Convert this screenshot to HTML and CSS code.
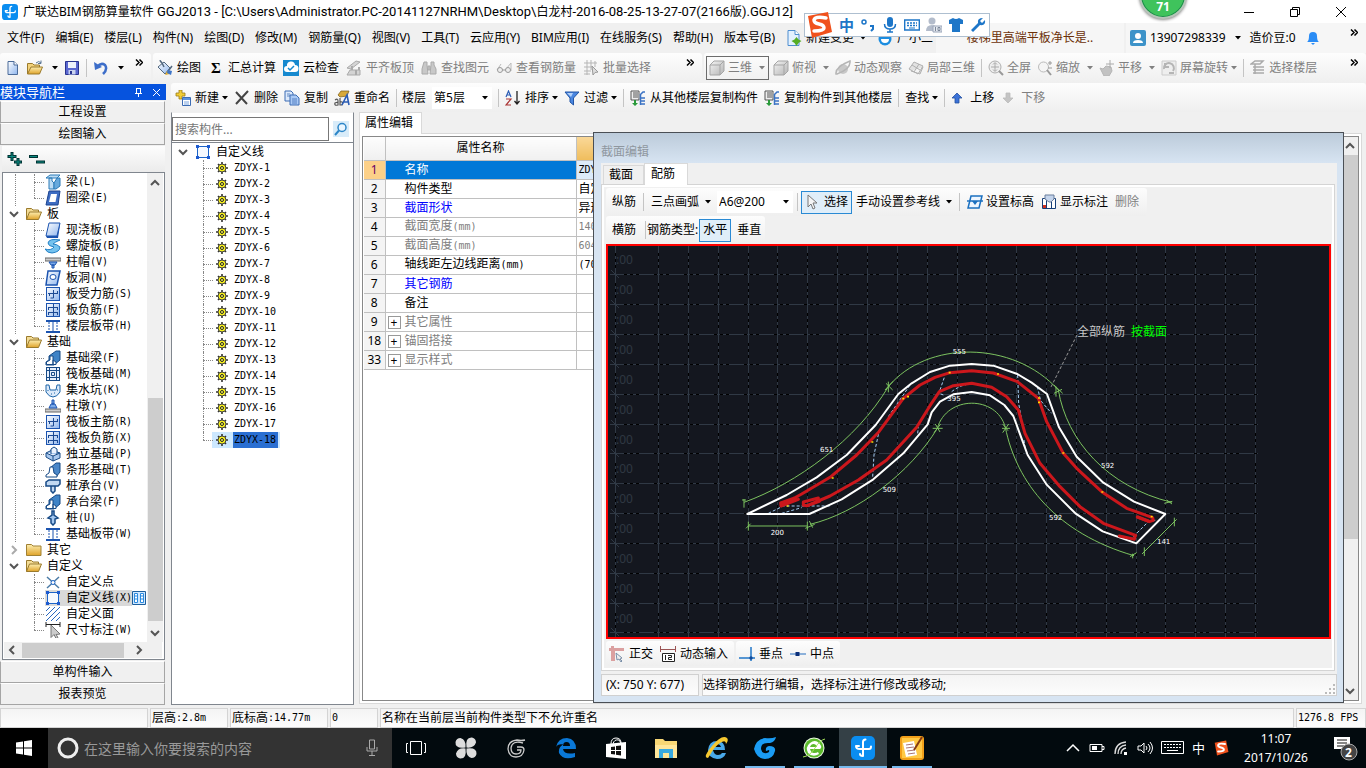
FILE: index.html
```html
<!DOCTYPE html>
<html lang="zh-CN">
<head>
<meta charset="utf-8">
<title>广联达BIM钢筋算量软件 GGJ2013</title>
<link rel="stylesheet" href="styles.css">
</head>
<body>
<svg class="defs" aria-hidden="true">
<defs>
<linearGradient id="gold" x1="0" y1="0" x2="0" y2="1"><stop offset="0" stop-color="#fdeeb0"/><stop offset="1" stop-color="#dfa32a"/></linearGradient>
<linearGradient id="blue" x1="0" y1="0" x2="1" y2="1"><stop offset="0" stop-color="#fff"/><stop offset="1" stop-color="#8fb6ee"/></linearGradient>
<linearGradient id="grey" x1="0" y1="0" x2="1" y2="1"><stop offset="0" stop-color="#f4f4f4"/><stop offset="1" stop-color="#b4b4b4"/></linearGradient>
<symbol id="app" viewBox="0 0 24 24"><rect width="24" height="24" rx="5" fill="#0a8df0"/><path d="M12 20V6M12 6q0-2.500 2.500-2.500M5 10q0 3 4 3h9q2 0 2-2.500M5 10h3M12 20q-3 0-3-2" fill="none" stroke="#fff" stroke-width="2" stroke-linecap="round"/></symbol>
<symbol id="caret" viewBox="0 0 6 4"><path d="M0 0h6L3 3.500z" fill="currentColor"/></symbol>
<symbol id="more" viewBox="0 0 8 7"><path d="M1 .5l3 3-3 3M4.500.5l3 3-3 3" fill="none" stroke="currentColor" stroke-width="1.500"/></symbol>
<symbol id="down" viewBox="0 0 10 10"><path d="M1 3l4 4 4-4" fill="none" stroke="currentColor" stroke-width="2"/></symbol>
<symbol id="new" viewBox="0 0 16 16"><path d="M3 1.500h6l3.500 3.500v9.500H3z" fill="url(#blue)" stroke="#4b6b99"/><path d="M9 1.500V5h3.500" fill="#fff" stroke="#4b6b99"/></symbol>
<symbol id="newg" viewBox="0 0 16 16"><path d="M2 .5h7l4 4v11H2z" fill="#e3f1ff" stroke="#4f8ed0"/><path d="M9 .5v4h4" fill="#fff" stroke="#4f8ed0"/><path d="M10.500 7l2 2.500 3 1.500-3 2-2 3-2-3-3-2 3-1.500z" fill="#55ad25"/></symbol>
<symbol id="open" viewBox="0 0 16 16"><path d="M.5 14V3.500h5L7 5h5.500v2" fill="#f3d27a" stroke="#9a7a2c"/><path d="M.5 14l3.500-7h11.500l-3 7z" fill="url(#gold)" stroke="#9a7a2c"/><path d="M9 3q3-3 5 0M14 .5V3.500h-3" fill="none" stroke="#5a7695"/></symbol>
<symbol id="fopen" viewBox="0 0 16 16"><path d="M.5 13.500V2.500h5L7 4h5.500v2" fill="#f3dc96" stroke="#9a7a2c"/><path d="M.5 13.500l3-7.500h12l-3 7.500z" fill="url(#gold)" stroke="#9a7a2c"/></symbol>
<symbol id="folder" viewBox="0 0 16 16"><path d="M.5 13.500v-11h5L7 4h8v9.500z" fill="url(#gold)" stroke="#a18133"/></symbol>
<symbol id="save" viewBox="0 0 16 16"><path d="M1.500 1.500h13v13h-13z" fill="#5a67d0" stroke="#28338f"/><path d="M4 2h8v6H4z" fill="#eef2fc"/><path d="M4.500 10h7v4.500h-7z" fill="#c9d3ef"/><path d="M6 11h2v3H6z" fill="#28338f"/></symbol>
<symbol id="undo" viewBox="0 0 16 16"><path d="M1 2l1 8 7-3z" fill="#3d6ec9"/><path d="M4 7q4-5 8-2 3 4-2 9" fill="none" stroke="#3d6ec9" stroke-width="2.500"/></symbol>
<symbol id="draw" viewBox="0 0 16 16"><path d="M1 7l6-5 6 6-5 6z" fill="url(#blue)" stroke="#52687f"/><path d="M4 2Q2-1 5 3l2 4M9 14l6-8" fill="none" stroke="#52687f" stroke-width="1.500"/><path d="M8 15l2-4 3 3z" fill="#e8b130"/><path d="M11 10l4 1-1 4-4-2z" fill="#3c74c8"/></symbol>
<symbol id="cloud" viewBox="0 0 16 16"><rect width="16" height="16" fill="#1689cf"/><path d="M4 12a3 3 0 010-6 4 4 0 018-1 3.500 3.500 0 010 7z" fill="#fff"/><path d="M5 8l2 2 4-4" fill="none" stroke="#1689cf" stroke-width="1.500"/></symbol>
<symbol id="align" viewBox="0 0 16 16"><path d="M1 8l9-7 4 1-9 7zM4 10h10v5H1z" fill="#d4d4d4" stroke="#aaa"/><path d="M6 10V6M10 10v5M13 10V7" stroke="#aaa" stroke-width="2"/></symbol>
<symbol id="find" viewBox="0 0 16 16"><path d="M3 2h3v3l1 9H1V9zM10 2h3v3l2 4v5H9l1-9zM7 6h2v4H7z" fill="#c8c8c8" stroke="#aaa"/></symbol>
<symbol id="glasses" viewBox="0 0 16 16"><path d="M1 10l4-6M10 9l5-6v8" fill="none" stroke="#bbb"/><circle cx="4" cy="10" r="2.500" fill="#eee" stroke="#999"/><circle cx="12" cy="10" r="2.500" fill="#eee" stroke="#999"/><path d="M6.500 10h3" stroke="#999"/></symbol>
<symbol id="batch" viewBox="0 0 16 16"><path d="M1 3h13M1 7h9M1 11h7M4 0v15M8 0v10M12 1v6M1 14h6" stroke="#b5b5b5"/><path d="M9 6l6 6-3 .5L10 15z" fill="#ddd" stroke="#999"/></symbol>
<symbol id="cube" viewBox="0 0 16 16"><path d="M1 5l4-4h10v10l-4 4H1z" fill="url(#grey)" stroke="#a5a5a5"/><path d="M1 5h10v10M11 5l4-4" fill="none" stroke="#a5a5a5"/></symbol>
<symbol id="orbit" viewBox="0 0 16 16"><ellipse cx="8" cy="9" rx="5" ry="5" fill="#c8c8c8"/><path d="M1 14Q0 7 15 1q1 8-13 13z" fill="none" stroke="#b5b5b5" stroke-width="1.500"/></symbol>
<symbol id="local3d" viewBox="0 0 16 16"><path d="M1 9l5-7 9 4-5 8zM4 5l8 5M6 12l5-8M3 11l9 3 3-7" fill="#e2e2e2" stroke="#b0b0b0"/></symbol>
<symbol id="full" viewBox="0 0 16 16"><circle cx="7" cy="7" r="6" fill="#eee" stroke="#b0b0b0"/><path d="M11 11l4 4" stroke="#999" stroke-width="2"/><path d="M7 3v8M3 7h8M5 4.500L7 2.500l2 2M5 9.500l2 2 2-2" fill="none" stroke="#aaa"/></symbol>
<symbol id="zoomi" viewBox="0 0 16 16"><circle cx="6.500" cy="7" r="5" fill="#f5f5f5" stroke="#bbb"/><path d="M10 10l4 5" stroke="#999" stroke-width="2"/><path d="M13 1v4M11 3h4M11 8h4" stroke="#999"/></symbol>
<symbol id="pan" viewBox="0 0 16 16"><path d="M1 8l3 1 3-3 5 1 1 4-3 5H5z" fill="#c2c2c2" stroke="#b5b5b5"/><path d="M11 0v8M7 4h8" stroke="#aaa"/></symbol>
<symbol id="rotate" viewBox="0 0 16 16"><path d="M1 1h14v14H1z" fill="#eee" stroke="#ccc"/><path d="M3 9a5 5 0 119 2M4 3v4h4M8 13h5" fill="none" stroke="#b5b5b5" stroke-width="2"/></symbol>
<symbol id="floors" viewBox="0 0 16 16"><path d="M1 4l4-3h8l-3 3zM3 7h11M3 10h11M3 13h11M5 4v10" fill="none" stroke="#aaa" stroke-width="1.500"/></symbol>
<symbol id="add" viewBox="0 0 16 16"><path d="M4 0h3v3h3v3H7v3H4V6H1V3h3z" fill="#f2cd35" stroke="#9a7b16" stroke-width=".8"/><path d="M7.500 7.500h8v8h-8z" fill="#fff" stroke="#3c6cb4"/><path d="M8 8h7v2H8z" fill="#5b93e0"/><path d="M9 12h5M9 14h5" stroke="#7aa4de"/></symbol>
<symbol id="x" viewBox="0 0 16 16"><path d="M2 2l11 12M14 1L2 14" stroke="#444" stroke-width="2"/></symbol>
<symbol id="copy" viewBox="0 0 16 16"><path d="M1 1h6l2 2v8H1z" fill="#dce9fb" stroke="#3c6cb4"/><path d="M6 5h6l3 3v7H6z" fill="#a9c9f5" stroke="#3c6cb4"/><path d="M8 9h5M8 11h5M8 13h5M3 4h3M3 6h3" stroke="#3c6cb4" stroke-width=".8"/></symbol>
<symbol id="rename" viewBox="0 0 16 16"><path d="M4 5l3-4h8l-2 5-7 1z" fill="#d8a93a" stroke="#7a5c18" stroke-width=".7"/><path d="M1 10q3-2 3 1v4q-4 1-3-2l3-1M6 8v7h2q2-4-2-3" fill="none" stroke="#555" stroke-width="1.200"/><path d="M8 15L13 5l2 10M10 12h5" fill="none" stroke="#2c5db5" stroke-width="1.600"/></symbol>
<symbol id="sort" viewBox="0 0 16 16"><path d="M1 7l2.500-6L6 7M2 5h3" fill="none" stroke="#2c5db5" stroke-width="1.200"/><path d="M1 9h5l-5 6h5" fill="none" stroke="#a33" stroke-width="1.200"/><path d="M12 1v13M9.500 11l2.500 3 2.500-3" fill="none" stroke="#222" stroke-width="1.300"/></symbol>
<symbol id="filter" viewBox="0 0 16 16"><path d="M1 2h14L9.500 8v7L6 12V8z" fill="#4a86e0" stroke="#2255a5"/><path d="M3 3h6L7 7z" fill="#b4d2fa"/></symbol>
<symbol id="floorcopy" viewBox="0 0 16 16"><path d="M1 1h8v9H1z" fill="#eee" stroke="#555"/><path d="M3 3h5M3 5h5M3 7h5" stroke="#555"/><path d="M4 10v3H2l3 3 3-3H6v-3z" fill="#2a9a3a"/><path d="M10 5l3-3h2M10 8h5M10 11h5M10 14h5M10.500 4v11" fill="none" stroke="#3b73c4" stroke-width="1.500"/></symbol>
<symbol id="up" viewBox="0 0 12 12"><path d="M6 1l5 5H8v5H4V6H1z" fill="#3c72d8" stroke="#2450a0" stroke-width=".8"/></symbol>
<symbol id="dn" viewBox="0 0 12 12"><path d="M6 11l5-5H8V1H4v5H1z" fill="#c4c4c4" stroke="#bbb" stroke-width=".8"/></symbol>
<symbol id="mag" viewBox="0 0 16 16"><rect width="16" height="16" fill="#d9ecf9"/><circle cx="9" cy="6.500" r="4" fill="#eaf6ff" stroke="#2c86c8" stroke-width="1.500"/><path d="M6 9.500L2 14" stroke="#2c86c8" stroke-width="2"/></symbol>
<symbol id="user" viewBox="0 0 16 16"><rect width="16" height="16" rx="2" fill="#3d93c9"/><circle cx="8" cy="6" r="3" fill="#fff"/><path d="M3 13q0-3 5-3t5 3z" fill="#fff"/></symbol>
<symbol id="bell" viewBox="0 0 16 16"><path d="M2 12q2-1 2-6a4 4 0 018 0q0 5 2 6zM6 13h4l-2 2z" fill="#2a8cf5"/></symbol>
<symbol id="bear" viewBox="0 0 16 16"><circle cx="3" cy="4" r="2.500" fill="#1c8de0"/><circle cx="13" cy="4" r="2.500" fill="#1c8de0"/><circle cx="8" cy="9" r="6.500" fill="#1c8de0"/><path d="M4 9h8q0 4-4 4t-4-4" fill="#fff"/></symbol>
<symbol id="beam" viewBox="0 0 16 16"><path d="M1 4l4-3h10l-3 3zM4 4h3v3l2 2v6H4z" fill="#bcdcf4" stroke="#2a7ab8"/><path d="M9 9l3-5h3v8l-4 3H9z" fill="#67a9dc" stroke="#2a7ab8"/></symbol>
<symbol id="ring" viewBox="0 0 16 16"><path d="M4 1h11l-2 14H1z" fill="#3d6cc2" stroke="#1b438f"/><path d="M6 4h6l-1.500 8H4z" fill="#fff"/></symbol>
<symbol id="slab" viewBox="0 0 16 16"><path d="M4 1h11l-3 13H1z" fill="url(#blue)" stroke="#1c54b0"/><path d="M15 1v2l-2 13H2l-1-2h11z" fill="#1c54b0"/></symbol>
<symbol id="spiral" viewBox="0 0 16 16"><path d="M15 2Q4 0 3 5q0 3 6 4-3 4-9 2 2 4 7 4 8-1 8-6-3-3-7-3 2-2 7-4z" fill="#74c2ee" stroke="#2480c5"/></symbol>
<symbol id="cap" viewBox="0 0 16 16"><path d="M0 4h16v3H0z" fill="#ccc" stroke="#666"/><path d="M4 8h8l-2 3H6zM7 11h2v3H7z" fill="#7aa9e8" stroke="#1c54b0"/></symbol>
<symbol id="hole" viewBox="0 0 16 16"><path d="M3 1h12l-3 14H1z" fill="url(#blue)" stroke="#1c54b0" stroke-width="1.500"/><ellipse cx="8" cy="7" rx="3" ry="2.500" fill="#fff" stroke="#1c54b0"/></symbol>
<symbol id="rebar" viewBox="0 0 16 16"><rect x="1.500" y="1.500" width="13" height="13" fill="url(#blue)" stroke="#1c54b0"/><path d="M3 7.500h10M8.500 4v8h-3M4.500 10V7.500M12.500 5v2.500" fill="none" stroke="#1c4a94"/></symbol>
<symbol id="rebar2" viewBox="0 0 16 16"><rect x="1.500" y="1.500" width="13" height="13" fill="url(#blue)" stroke="#1c54b0"/><path d="M8.500 2v12M3 5.500h10M3.500 5v3M12.500 5v3M3 10.500h10M3.500 10v3M12.500 10v3" stroke="#1c4a94"/></symbol>
<symbol id="strip" viewBox="0 0 16 16"><path d="M1 3h14M1 14h14" stroke="#1c54b0" stroke-width="2"/><path d="M8 3v11" stroke="#1c54b0"/><path d="M4 4v9M12 4v9" stroke="#1c54b0" stroke-dasharray="2 1"/></symbol>
<symbol id="fbeam" viewBox="0 0 16 16"><path d="M1 15v-3l3-2V6l7-5h4v9l-6 5z" fill="#3f83c6" stroke="#174a86"/><path d="M1.500 14.500V12L5 10V6h3v8.500zM8 14.500V10l3 2v2.500z" fill="#fff" stroke="#174a86"/></symbol>
<symbol id="raft" viewBox="0 0 16 16"><rect x="1.500" y="1.500" width="13" height="13" fill="#e6effc" stroke="#174a86"/><path d="M4.500 1v14M11.500 1v14M1 4.500h14M1 11.500h14M6.500 6.500h3v3h-3z" fill="none" stroke="#174a86"/></symbol>
<symbol id="pit" viewBox="0 0 16 16"><path d="M1 3h3l1 5h6l1-5h3v7q-3 5-7 5t-7-5z" fill="#dceafa" stroke="#1c64a8"/><path d="M3 8v1M6 12h1M9 11h1M12 8h1" stroke="#1c64a8"/></symbol>
<symbol id="pier" viewBox="0 0 16 16"><path d="M0 11h16v3H0z" fill="#ccc" stroke="#666"/><path d="M4 10l2-4h4l2 4zM7 2h2v4H7z" fill="#7aa9e8" stroke="#1c54b0"/></symbol>
<symbol id="found" viewBox="0 0 16 16"><path d="M1 7l6-3 8 3v5l-7 3-7-4z" fill="#aac9ee" stroke="#174a86"/><path d="M1 7l7 3 7-3M8 10v5M6 8V3l3-2 3 2v5" fill="#eaf2fd" stroke="#174a86"/></symbol>
<symbol id="tfound" viewBox="0 0 16 16"><path d="M5 6l6-5h4v9l-4 5z" fill="#4b87c8" stroke="#174a86"/><path d="M1 15v-2l3-2 1-6h3l1 6 3 2v2z" fill="#fff" stroke="#174a86"/></symbol>
<symbol id="pcap" viewBox="0 0 16 16"><path d="M1 4l3-2h11v4l-2 2H1zM6 8h4v5l-2 2-2-2z" fill="#c1d8f2" stroke="#174a86" stroke-width="1.500"/></symbol>
<symbol id="pile" viewBox="0 0 16 16"><path d="M7 1h2v4l4 3-3 1v4l-2 2-2-2V9L3 8l4-3z" fill="#a5c8f0" stroke="#174a86" stroke-width="1.500"/></symbol>
<symbol id="pt" viewBox="0 0 16 16"><path d="M2 3l12 11M14 3L2 14" stroke="#4a7aa5" stroke-width="1.500"/><circle cx="8" cy="8.500" r="2" fill="#fff" stroke="#1c64c8"/></symbol>
<symbol id="box" viewBox="0 0 16 16"><path d="M2.500 2.500h11v11h-11z" fill="#f5f9ff" stroke="#1c64c8"/><path d="M1 1h3v3H1zM12 1h3v3h-3zM1 12h3v3H1zM12 12h3v3h-3z" fill="#1c5ad0"/></symbol>
<symbol id="hatch" viewBox="0 0 16 16"><path d="M1 5l4-4M1 10l9-9M1 15L15 1M6 15l9-9M11 15l4-4" stroke="#2a68c0"/></symbol>
<symbol id="dim" viewBox="0 0 16 16"><path d="M1 0v5M15 0v5M1 2.500h14" stroke="#222"/><path d="M6 3l9 9-4 .5 2 3-2 1-2-4-3 3z" fill="#ccc" stroke="#777"/></symbol>
<symbol id="gear" viewBox="0 0 12 12"><path d="M6 0v12M0 6h12M2 2l8 8M10 2l-8 8" stroke="#333" stroke-width="1.600"/><circle cx="6" cy="6" r="4" fill="#f7f01c" stroke="#444"/><circle cx="6" cy="6" r="1.500" fill="#ff6" stroke="#222"/></symbol>
<symbol id="cursor" viewBox="0 0 16 16"><path d="M3 1v12l3-3 2 5 2-1-2-5h4z" fill="#f5f5f5" stroke="#777"/></symbol>
<symbol id="elev" viewBox="0 0 16 16"><path d="M4 2h11l-3 12H1z" fill="#eef6ff" stroke="#1b70c0" stroke-width="1.500"/><path d="M0 7h16" stroke="#1b70c0" stroke-width="1.500"/><path d="M5 7h6l-3 4z" fill="#1b70c0"/></symbol>
<symbol id="showdim" viewBox="0 0 16 16"><path d="M1.500 4.500h13v10h-13z" fill="#fff" stroke="#173f78"/><path d="M5.500 5v10M10.500 5v10" stroke="#173f78"/><path d="M4 1h9v4l-3 3H8L4 5z" fill="#c4d4ec" stroke="#6b7e9c"/><path d="M2 11h3v3H2z" fill="#d03020"/></symbol>
<symbol id="ortho" viewBox="0 0 16 16"><path d="M0 2h15v3H6v10H2V5H0zM2 0h3v3H2z" fill="#dba0a0"/><path d="M7 7l6 5-2 1 2 2-1 1-2-3-2 1z" fill="#eee" stroke="#7a8fa8"/></symbol>
<symbol id="dyn" viewBox="0 0 16 16"><path d="M0 3.500h16M.5 0v6M15.500 0v6" stroke="#9b5555"/><path d="M2.500 7.500h12v8h-12z" fill="#fff" stroke="#222"/><path d="M5.500 9v5M8 9.500h3.500v2h-3v2H12" fill="none" stroke="#222"/></symbol>
<symbol id="perp" viewBox="0 0 16 16"><path d="M0 12h16M12 1v14" stroke="#2277c8" stroke-width="1.500"/><circle cx="12" cy="12" r="1.700" fill="#114a9a"/></symbol>
<symbol id="mid" viewBox="0 0 16 16"><path d="M0 8h16" stroke="#6a9ad0" stroke-width="1.500"/><path d="M5.500 6h4v4h-4z" fill="#0b2f7a"/></symbol>
<symbol id="sogou" viewBox="0 0 28 28"><path d="M3 5L23 1l4 20-20 6z" fill="#f0511c"/><path d="M21 7q-11-2-12 2 0 3 5 4t5 4-10 3" fill="none" stroke="#fff" stroke-width="3.500" stroke-linecap="round"/></symbol>
</defs>
</svg>

<header class="titlebar">
  <svg class="i16"><use href="#app"/></svg>
  <h1>广联达BIM钢筋算量软件<span class="path"> GGJ2013 - [C:\Users\Administrator.PC-20141127NRHM\Desktop\</span>白龙村<span class="path">-2016-08-25-13-27-07(2166</span>版<span class="path">).GGJ12]</span></h1>
  <div class="winbtns">
    <button aria-label="最小化"><svg viewBox="0 0 10 10"><path d="M0 5.500h10" stroke="#000"/></svg></button>
    <button aria-label="还原"><svg viewBox="0 0 10 10"><path d="M.5 2.500h7v7h-7zM2.500 2.500v-2h7v7h-2" fill="none" stroke="#000"/></svg></button>
    <button aria-label="关闭"><svg viewBox="0 0 10 10"><path d="M0 0l10 10M10 0L0 10" stroke="#000"/></svg></button>
  </div>
</header>

<nav class="menubar">
  <div class="menus">
    <button>文件(F)</button><button>编辑(E)</button><button>楼层(L)</button><button>构件(N)</button><button>绘图(D)</button><button>修改(M)</button><button>钢筋量(Q)</button><button>视图(V)</button><button>工具(T)</button><button>云应用(Y)</button><button>BIM应用(I)</button><button>在线服务(S)</button><button>帮助(H)</button><button>版本号(B)</button>
    <button><svg class="i16"><use href="#newg"/></svg>新建变更<svg class="caret"><use href="#caret"/></svg></button>
    <button><svg class="i16"><use href="#bear"/></svg>广小二</button>
  </div>
  <div class="tip"><a href="#tip">楼梯里高端平板净长是..</a></div>
  <div class="account">
    <button><svg class="i16"><use href="#user"/></svg>13907298339<svg class="caret"><use href="#caret"/></svg></button>
    <span>造价豆:0</span>
    <svg class="i16"><use href="#bell"/></svg>
    <svg class="more"><use href="#more"/></svg>
  </div>
</nav>

<div class="toolbars">
  <div class="bar files">
    <button aria-label="新建"><svg class="i16"><use href="#new"/></svg></button>
    <button aria-label="打开"><svg class="i16"><use href="#open"/></svg><svg class="caret"><use href="#caret"/></svg></button>
    <button aria-label="保存"><svg class="i16"><use href="#save"/></svg></button>
    <i class="sep"></i>
    <button aria-label="撤销"><svg class="i16"><use href="#undo"/></svg><svg class="caret"><use href="#caret"/></svg></button>
    <svg class="more"><use href="#more"/></svg>
  </div>
  <div class="bar edit">
    <button><svg class="i16"><use href="#draw"/></svg>绘图</button>
    <button><b class="sigma">Σ</b>汇总计算</button>
    <button><svg class="i16"><use href="#cloud"/></svg>云检查</button>
    <button disabled><svg class="i16"><use href="#align"/></svg>平齐板顶</button>
    <button disabled><svg class="i16"><use href="#find"/></svg>查找图元</button>
    <button disabled><svg class="i16"><use href="#glasses"/></svg>查看钢筋量</button>
    <button disabled><svg class="i16"><use href="#batch"/></svg>批量选择</button>
    <svg class="more"><use href="#more"/></svg>
  </div>
  <div class="bar views">
    <button disabled class="boxed"><svg class="i16"><use href="#cube"/></svg>三维<svg class="caret"><use href="#caret"/></svg></button>
    <button disabled><svg class="i16"><use href="#cube"/></svg>俯视<svg class="caret"><use href="#caret"/></svg></button>
    <button disabled><svg class="i16"><use href="#orbit"/></svg>动态观察</button>
    <button disabled><svg class="i16"><use href="#local3d"/></svg>局部三维</button>
    <i class="sep"></i>
    <button disabled><svg class="i16"><use href="#full"/></svg>全屏</button>
    <button disabled><svg class="i16"><use href="#zoomi"/></svg>缩放<svg class="caret"><use href="#caret"/></svg></button>
    <button disabled><svg class="i16"><use href="#pan"/></svg>平移<svg class="caret"><use href="#caret"/></svg></button>
    <button disabled class="tight"><svg class="i16"><use href="#rotate"/></svg>屏幕旋转<svg class="caret"><use href="#caret"/></svg></button>
    <i class="sep"></i>
    <button disabled><svg class="i16"><use href="#floors"/></svg>选择楼层</button>
    <svg class="more"><use href="#more"/></svg>
  </div>
</div>

<div class="workspace">
  <aside class="nav">
    <div class="navtitle"><span>模块导航栏</span>
      <button aria-label="固定"><svg viewBox="0 0 9 9"><path d="M2 .5h5M2.500 0v5M6.500 0v5M1 5.500h7M4.500 5.500V9" stroke="#fff"/></svg></button>
      <button aria-label="关闭"><svg viewBox="0 0 9 9"><path d="M1 1l7 7M8 1L1 8" stroke="#fff"/></svg></button>
    </div>
    <button class="navbtn">工程设置</button>
    <button class="navbtn">绘图输入</button>
    <div class="expand">
      <button aria-label="全部展开"><svg viewBox="0 0 16 14"><path d="M5 0v9M.5 4.500h9M11 6v8M7 10h8" stroke="#033" stroke-width="3"/><path d="M5 1v7M1.500 4.500h7M11 7v6M8 10h6" stroke="#0a8a80"/></svg></button>
      <button aria-label="全部折叠"><svg viewBox="0 0 16 14"><path d="M0 4.500h9M7 10h9" stroke="#033" stroke-width="3"/><path d="M1 4.500h7M8 10h7" stroke="#0a8a80"/></svg></button>
    </div>
    <div class="treebox">
      <div class="treerow">
        <ul class="tree">
          <li><ul class="sub">
            <li><svg class="i16"><use href="#beam"/></svg>梁<span class="m">(L)</span></li>
            <li><svg class="i16"><use href="#ring"/></svg>圈梁<span class="m">(E)</span></li>
          </ul></li>
          <li><div class="folder"><svg class="tw"><use href="#down"/></svg><svg class="i16"><use href="#fopen"/></svg>板</div><ul class="sub">
            <li><svg class="i16"><use href="#slab"/></svg>现浇板<span class="m">(B)</span></li>
            <li><svg class="i16"><use href="#spiral"/></svg>螺旋板<span class="m">(B)</span></li>
            <li><svg class="i16"><use href="#cap"/></svg>柱帽<span class="m">(V)</span></li>
            <li><svg class="i16"><use href="#hole"/></svg>板洞<span class="m">(N)</span></li>
            <li><svg class="i16"><use href="#rebar"/></svg>板受力筋<span class="m">(S)</span></li>
            <li><svg class="i16"><use href="#rebar2"/></svg>板负筋<span class="m">(F)</span></li>
            <li><svg class="i16"><use href="#strip"/></svg>楼层板带<span class="m">(H)</span></li>
          </ul></li>
          <li><div class="folder"><svg class="tw"><use href="#down"/></svg><svg class="i16"><use href="#fopen"/></svg>基础</div><ul class="sub">
            <li><svg class="i16"><use href="#fbeam"/></svg>基础梁<span class="m">(F)</span></li>
            <li><svg class="i16"><use href="#raft"/></svg>筏板基础<span class="m">(M)</span></li>
            <li><svg class="i16"><use href="#pit"/></svg>集水坑<span class="m">(K)</span></li>
            <li><svg class="i16"><use href="#pier"/></svg>柱墩<span class="m">(Y)</span></li>
            <li><svg class="i16"><use href="#rebar"/></svg>筏板主筋<span class="m">(R)</span></li>
            <li><svg class="i16"><use href="#rebar2"/></svg>筏板负筋<span class="m">(X)</span></li>
            <li><svg class="i16"><use href="#found"/></svg>独立基础<span class="m">(P)</span></li>
            <li><svg class="i16"><use href="#tfound"/></svg>条形基础<span class="m">(T)</span></li>
            <li><svg class="i16"><use href="#pcap"/></svg>桩承台<span class="m">(V)</span></li>
            <li><svg class="i16"><use href="#fbeam"/></svg>承台梁<span class="m">(F)</span></li>
            <li><svg class="i16"><use href="#pile"/></svg>桩<span class="m">(U)</span></li>
            <li><svg class="i16"><use href="#strip"/></svg>基础板带<span class="m">(W)</span></li>
          </ul></li>
          <li><div class="folder"><svg class="tw shut"><use href="#down"/></svg><svg class="i16"><use href="#folder"/></svg>其它</div></li>
          <li><div class="folder"><svg class="tw"><use href="#down"/></svg><svg class="i16"><use href="#fopen"/></svg>自定义</div><ul class="sub last">
            <li><svg class="i16"><use href="#pt"/></svg>自定义点</li>
            <li class="cur"><span class="hl"><svg class="i16"><use href="#box"/></svg>自定义线<span class="m">(X)</span></span><svg class="book" viewBox="0 0 14 14"><path d="M.5.5h13v13H.5z" fill="#cfe8ff" stroke="#1e5f9c"/><path d="M2.500 2.500h3v9h-3zM8.500 2.500h3v9h-3z" fill="#fff" stroke="#2a8ae0"/><path d="M2 5h4M2 8h4M8 5h4M8 8h4" stroke="#2a8ae0"/></svg></li>
            <li><svg class="i16"><use href="#hatch"/></svg>自定义面</li>
            <li><svg class="i16"><use href="#dim"/></svg>尺寸标注<span class="m">(W)</span></li>
          </ul></li>
        </ul>
        <div class="vscroll navscroll"><svg class="tw flip"><use href="#down"/></svg><i class="space"></i><i class="thumb"></i><svg class="tw"><use href="#down"/></svg></div>
      </div>
      <div class="hscroll"><svg class="tw left"><use href="#down"/></svg><i class="thumb"></i><svg class="tw right"><use href="#down"/></svg></div>
    </div>
    <button class="navbtn">单构件输入</button>
    <button class="navbtn">报表预览</button>
  </aside>

  <main class="content">
    <div class="bar comp">
      <button><svg class="i16"><use href="#add"/></svg>新建<svg class="caret"><use href="#caret"/></svg></button>
      <button><svg class="i16"><use href="#x"/></svg>删除</button>
      <button><svg class="i16"><use href="#copy"/></svg>复制</button>
      <button><svg class="i16"><use href="#rename"/></svg>重命名</button>
      <i class="sep"></i>
      <label class="floor">楼层<span class="combo"><select><option>第5层</option></select><svg class="caret"><use href="#caret"/></svg></span></label>
      <i class="sep"></i>
      <button><svg class="i16"><use href="#sort"/></svg>排序<svg class="caret"><use href="#caret"/></svg></button>
      <button><svg class="i16"><use href="#filter"/></svg>过滤<svg class="caret"><use href="#caret"/></svg></button>
      <i class="sep"></i>
      <button><svg class="i16"><use href="#floorcopy"/></svg>从其他楼层复制构件</button>
      <button><svg class="i16"><use href="#floorcopy"/></svg>复制构件到其他楼层</button>
      <i class="sep"></i>
      <button>查找<svg class="caret"><use href="#caret"/></svg></button>
      <i class="sep"></i>
      <button class="mv"><svg class="i12"><use href="#up"/></svg>上移</button>
      <button class="mv" disabled><svg class="i12"><use href="#dn"/></svg>下移</button>
    </div>
    <div class="panels">
      <section class="list">
        <div class="search"><input type="text" placeholder="搜索构件..." aria-label="搜索构件"><button aria-label="搜索"><svg class="i16"><use href="#mag"/></svg></button></div>
        <div class="listbox">
          <div class="root"><svg class="tw"><use href="#down"/></svg><svg class="i16"><use href="#box"/></svg>自定义线</div>
          <ul class="sub comps">
            <li><svg class="i12"><use href="#gear"/></svg><span class="m">ZDYX-1</span></li>
            <li><svg class="i12"><use href="#gear"/></svg><span class="m">ZDYX-2</span></li>
            <li><svg class="i12"><use href="#gear"/></svg><span class="m">ZDYX-3</span></li>
            <li><svg class="i12"><use href="#gear"/></svg><span class="m">ZDYX-4</span></li>
            <li><svg class="i12"><use href="#gear"/></svg><span class="m">ZDYX-5</span></li>
            <li><svg class="i12"><use href="#gear"/></svg><span class="m">ZDYX-6</span></li>
            <li><svg class="i12"><use href="#gear"/></svg><span class="m">ZDYX-7</span></li>
            <li><svg class="i12"><use href="#gear"/></svg><span class="m">ZDYX-8</span></li>
            <li><svg class="i12"><use href="#gear"/></svg><span class="m">ZDYX-9</span></li>
            <li><svg class="i12"><use href="#gear"/></svg><span class="m">ZDYX-10</span></li>
            <li><svg class="i12"><use href="#gear"/></svg><span class="m">ZDYX-11</span></li>
            <li><svg class="i12"><use href="#gear"/></svg><span class="m">ZDYX-12</span></li>
            <li><svg class="i12"><use href="#gear"/></svg><span class="m">ZDYX-13</span></li>
            <li><svg class="i12"><use href="#gear"/></svg><span class="m">ZDYX-14</span></li>
            <li><svg class="i12"><use href="#gear"/></svg><span class="m">ZDYX-15</span></li>
            <li><svg class="i12"><use href="#gear"/></svg><span class="m">ZDYX-16</span></li>
            <li><svg class="i12"><use href="#gear"/></svg><span class="m">ZDYX-17</span></li>
            <li class="picked"><span class="halo"><svg class="i12"><use href="#gear"/></svg><span class="m">ZDYX-18</span></span></li>
          </ul>
        </div>
      </section>
      <section class="props">
        <div class="tabs"><button class="tab on">属性编辑</button></div>
        <div class="tabbody">
          <div class="gridbox">
            <div class="gridwrap">
              <table>
                <colgroup><col class="c1"><col class="c2"><col></colgroup>
                <thead><tr><th></th><th>属性名称</th><th class="hot"></th></tr></thead>
                <tbody>
                  <tr class="sel"><th>1</th><td>名称</td><td><span class="m">ZDYX-18</span></td></tr>
                  <tr><th>2</th><td>构件类型</td><td>自定义线</td></tr>
                  <tr class="link"><th>3</th><td>截面形状</td><td>异形</td></tr>
                  <tr class="dim"><th>4</th><td>截面宽度<span class="m">(mm)</span></td><td><span class="m">1400</span></td></tr>
                  <tr class="dim"><th>5</th><td>截面高度<span class="m">(mm)</span></td><td><span class="m">604</span></td></tr>
                  <tr><th>6</th><td>轴线距左边线距离<span class="m">(mm)</span></td><td><span class="m">(700)</span></td></tr>
                  <tr class="link"><th>7</th><td>其它钢筋</td><td></td></tr>
                  <tr><th>8</th><td>备注</td><td></td></tr>
                  <tr class="dim grp"><th>9</th><td><button aria-label="展开">+</button>其它属性</td><td></td></tr>
                  <tr class="dim grp"><th>18</th><td><button aria-label="展开">+</button>锚固搭接</td><td></td></tr>
                  <tr class="dim grp"><th>33</th><td><button aria-label="展开">+</button>显示样式</td><td></td></tr>
                </tbody>
              </table>
            </div>
            <div class="vscroll"><svg class="tw flip"><use href="#down"/></svg><i class="thumb tall"></i><i class="space"></i><svg class="tw"><use href="#down"/></svg></div>
          </div>
        </div>
      </section>
    </div>
  </main>

  <section class="dialog" role="dialog" aria-labelledby="dlgt">
    <h2 id="dlgt">截面编辑</h2>
    <div class="dlgmain">
      <div class="tabs"><button class="tab">截面</button><button class="tab on wide">配筋</button></div>
      <div class="dlgbody">
        <div class="bar line1">
          <button>纵筋</button><i class="sep"></i>
          <button>三点画弧<svg class="caret"><use href="#caret"/></svg></button>
          <span class="combo spec"><select aria-label="钢筋规格"><option>A6@200</option></select><svg class="caret"><use href="#caret"/></svg></span>
          <i class="sep"></i>
          <button class="active"><svg class="i16"><use href="#cursor"/></svg>选择</button>
          <button>手动设置参考线<svg class="caret"><use href="#caret"/></svg></button>
          <i class="sep"></i>
          <button><svg class="i16"><use href="#elev"/></svg>设置标高</button>
          <button><svg class="i16"><use href="#showdim"/></svg>显示标注</button>
          <button disabled>删除</button>
        </div>
        <div class="bar line2">
          <button>横筋</button><i class="sep"></i><span>钢筋类型:</span><button class="active">水平</button><button class="vert">垂直</button>
        </div>
        <svg class="canvas" viewBox="608 246 721 391" preserveAspectRatio="xMinYMin slice">
          <rect x="608" y="246" width="721" height="391" fill="#14171f"/>
          <g fill="none" shape-rendering="crispEdges">
            <path d="M658.500 246v391M688.500 246v391M718.500 246v391M748.500 246v391M777.500 246v391M807.500 246v391M837.500 246v391M867.500 246v391M897.500 246v391M927.500 246v391M957.500 246v391M986.500 246v391M1016.500 246v391M1046.500 246v391M1076.500 246v391M1106.500 246v391M1136.500 246v391M1165.500 246v391M1195.500 246v391M1225.500 246v391M1255.500 246v391M615.500 246v391" stroke="#303945"/>
            <path d="M610 274.500h648M610 304.500h648M610 334.500h648M610 364.500h648M610 394.500h648M610 424.500h648M610 453.500h648M610 483.500h648M610 513.500h648M610 543.500h648M610 573.500h648M610 603.500h648M610 632.500h648" stroke="#303945"/>
            <path d="M658.500 246v391M688.500 246v391M718.500 246v391M748.500 246v391M777.500 246v391M807.500 246v391M837.500 246v391M867.500 246v391M897.500 246v391M927.500 246v391M957.500 246v391M986.500 246v391M1016.500 246v391M1046.500 246v391M1076.500 246v391M1106.500 246v391M1136.500 246v391M1165.500 246v391M1195.500 246v391M1225.500 246v391M1255.500 246v391M615.500 246v391" stroke="#000" stroke-dasharray="0 7 3 3 3 3 3 8"/>
            <path d="M610 274.500h648M610 304.500h648M610 334.500h648M610 364.500h648M610 394.500h648M610 424.500h648M610 453.500h648M610 483.500h648M610 513.500h648M610 543.500h648M610 573.500h648M610 603.500h648M610 632.500h648" stroke="#000" stroke-dasharray="0 14 3 3 3 3 3 1"/>
            <path d="M611 270l8 8M611 300l8 8M611 330l8 8M611 360l8 8M611 390l8 8M611 420l8 8M611 449l8 8M611 479l8 8M611 509l8 8M611 539l8 8M611 569l8 8M611 599l8 8M611 628l8 8" stroke="#303945"/>
          </g>
          <g class="ruler"><text x="616" y="264">:00</text><text x="616" y="294">:00</text><text x="616" y="324">:00</text><text x="616" y="354">:00</text><text x="616" y="384">:00</text><text x="616" y="414">:00</text><text x="616" y="444">:00</text><text x="616" y="473">:00</text><text x="616" y="503">:00</text><text x="616" y="533">:00</text><text x="616" y="563">:00</text><text x="616" y="593">:00</text><text x="616" y="623">:00</text></g>
          <path d="M1077 335L1051 387" stroke="#999" stroke-dasharray="3 2" fill="none"/>
          <g transform="translate(730 340) scale(.33333)" fill="none" stroke-linejoin="round">
            <path d="M115 520L160 498H300M155 520L215 503M428 410L432 345 448 270M475 230L545 128M563 280L565 262M640 165L628 160M630 150L643 112M665 155Q690 135 720 132M863 105L866 190 874 235M882 300L886 328M922 140L932 182 965 220M1200 600L1255 545 1280 540" stroke="#a8cff5" stroke-width="3" stroke-dasharray="9 6"/>
            <path d="M52 522L170 465 260 412 350 345 437 255 505 162 545 130 600 96 660 77 725 72 790 77 862 102 905 128 951 162 987 262 1040 350 1120 428 1212 485 1306 522 1219 610 1118 574 1036 520 950 434 893 345 850 228 823 195 780 166 725 156 670 163 630 185 605 217 593 253 520 340 430 418 335 478 238 522z" stroke="#fff" stroke-width="6"/>
            <g stroke="#cc171c" stroke-width="9" stroke-linecap="round">
              <path d="M190 475L152 489 153 498 205 478M155 495L215 462 300 412 380 345 447 275 520 175 570 135 615 112 660 98 725 92 790 99 862 125 925 175 950 245 1000 340 1040 385 1115 455 1190 505 1268 533 1270 541 1258 545 1222 531"/>
              <path d="M265 474L220 486 220 496 232 497 300 468 385 420 470 360 560 262 600 197 628 155 670 137 725 130 785 142 830 170 865 210 885 280 930 370 990 440 1050 500 1120 550 1217 586 1213 598 1168 588"/>
              <path d="M232 497L268 484M1223 531l32 12"/>
            </g>
            <g stroke="#7cc35f" stroke-width="3">
              <path d="M42 487C200 430 380 300 475 140M475 140C590 0 850 0 985 150M985 150C1010 300 1130 440 1325 487M1333 545L1243 635M55 558H232M240 553C380 520 540 400 622 265M622 265C650 165 800 165 826 262M826 262C860 430 980 580 1212 647"/>
              <path d="M42 477v26M36 480h12M55 545v27M48 565l14-14M232 545v27M226 565l28-12M238 543l10 20M465 150l24-26M475 125v32M468 130l20 20M972 135l26 25M972 160l24-12M978 140v30M608 265h30M612 278l20-26M616 252l14 24M816 265h24M818 278l18-26M818 252l16 20M1303 490l24-6M1310 480l16 12M1333 533v26M1326 552l14-14M1243 622v26M1236 642l14-14M1200 650l20-12M1208 655v-14"/>
            </g>
            <path d="M517 176h6M531 170h6M656 98h6M801 102h6M924 174h6M924 187h6M997 339h6M1114 456h6M1262 530h6M424 306h6M305 414h6M170 498h6" stroke="#ffd800" stroke-width="5"/>
            <g class="dims"><text x="668" y="43">555</text><text x="652" y="184">395</text><text x="270" y="337">651</text><text x="458" y="457">509</text><text x="1113" y="385">592</text><text x="957" y="541">592</text><text x="122" y="586">200</text><text x="1281" y="613">141</text></g>
          </g>
          <text class="note" x="1077" y="336">全部纵筋</text><text class="note green" x="1131" y="336">按截面</text>
        </svg>
        <div class="snap">
          <div class="bar"><button><svg class="i16"><use href="#ortho"/></svg>正交</button><button><svg class="i16"><use href="#dyn"/></svg>动态输入</button></div>
          <div class="bar"><button><svg class="i16"><use href="#perp"/></svg>垂点</button><button><svg class="i16"><use href="#mid"/></svg>中点</button></div>
        </div>
      </div>
      <div class="dlgstatus"><span class="xy">(X: 750 Y: 677)</span><span class="msg">选择钢筋进行编辑，选择标注进行修改或移动;<svg viewBox="0 0 10 10"><path d="M8 0h2v2H8zM4 4h2v2H4zM8 4h2v2H8zM0 8h2v2H0zM4 8h2v2H4zM8 8h2v2H8z" fill="#bbb"/></svg></span></div>
    </div>
  </section>
</div>

<footer class="status"><span class="s1"></span><span class="s2">层高<span class="m">:2.8m</span></span><span class="s3">底标高<span class="m">:14.77m</span></span><span class="s4"><span class="m">0</span></span><span class="s5">名称在当前层当前构件类型下不允许重名</span><span class="s6"><span class="m">1276.8 FPS</span></span></footer>

<div class="taskbar">
  <button class="start" aria-label="开始"><svg viewBox="0 0 16 16"><path d="M0 2.500l7-1v6H0zM8 1.300L16 0v7.500H8zM0 8.500h7v6l-7-1zM8 8.500h8V16l-8-1.200z" fill="#fff"/></svg></button>
  <label class="find"><svg viewBox="0 0 22 22"><circle cx="11" cy="11" r="9" fill="none" stroke="#eee" stroke-width="3"/></svg><input type="text" placeholder="在这里输入你要搜索的内容" aria-label="搜索"><svg class="mic" viewBox="0 0 12 18"><path d="M3.500 1h5v9h-5zM1 8v4h10V8M6 12v4M3 16.500h6" fill="none" stroke="#aaa"/></svg></label>
  <div class="apps">
    <button aria-label="任务视图"><svg viewBox="0 0 24 24"><path d="M6.500 5.500h11v13h-11zM4 7.500H2.500v9H4M20 7.500h1.500v9H20" fill="none" stroke="#fff"/></svg></button>
    <button aria-label="风扇"><svg viewBox="0 0 24 24"><path d="M11.500 11.500Q1 13 1.500 6q1-4 5-4 6 2 5 9.500zM12.500 11.500Q11 1 18 1.500q4 1 4 5-2 6-9.500 5zM12.500 12.500q10.500-1.500 10 5.500-1 4-5 4-6-2-5-9.500zM11.500 12.500q1.500 10.500-5.500 10-4-1-4-5 2-6 9.500-5z" fill="#ddd"/></svg></button>
    <button aria-label="漩涡"><svg viewBox="0 0 24 24"><path d="M21 4q-4 1-8 0-9 1-9 9 1 8 8 8t8-7q0-3-3-3h-4M19 7Q8 4 7 12q0 6 5 6t5-4h-4" fill="none" stroke="#ccc" stroke-width="1.300"/></svg></button>
    <button aria-label="Edge"><svg viewBox="0 0 24 24"><path d="M2 11Q4 2 13 2q9 1 9 11H9q1 6 12 4v4q-12 4-16-4-1-6 5-9-7 0-8 3zM9 10h7q0-4-3.500-4T9 10z" fill="#0a78d7" fill-rule="evenodd"/></svg></button>
    <button aria-label="应用商店"><svg viewBox="0 0 24 24"><path d="M2 8l20-2v17L2 21z" fill="#fff"/><path d="M7 8q0-6 5-6t5 5M9 8q1-5 6-4l2 3" fill="none" stroke="#fff"/><path d="M7 11l4-.5V14H7zM12 10l5-.5V14h-5zM7 15h4v3.500L7 18zM12 15h5v4.500l-5-.7z" fill="#111"/></svg></button>
    <button aria-label="文件资源管理器"><svg viewBox="0 0 24 24"><path d="M1 3h8l2 2h12v17H1z" fill="#f8d775"/><path d="M1 9h22v13H1z" fill="#ffe69a"/><path d="M5 22v-9h14v9h-4v-5H9v5z" fill="#38a9e0"/></svg></button>
    <button aria-label="Internet Explorer"><svg viewBox="0 0 24 24"><path d="M21 14H9q1 5 5 5 3 0 4-2h4q-2 6-9 6-9-1-9-9 1-9 9-9t8 9zM9 11h8q-1-3-4-3t-4 3z" fill="#49a9ea" fill-rule="evenodd"/><path d="M4 22Q-2 22 8 10T23 2q2 2-1 6 0-5-6-1T6 19z" fill="#f6c830"/></svg></button>
    <button class="run" aria-label="广联达"><svg viewBox="0 0 24 24"><path d="M23 1q-1 5-6 6-9-1-9 6 1 5 6 4 3-1 2-3l-3 1q-1-4 3-5 7 0 6 5-2 8-10 8T1 13Q3 3 12 2q6 1 11-1z" fill="#1a9cf4"/></svg></button>
    <button class="run" aria-label="浏览器"><svg viewBox="0 0 24 24"><circle cx="12" cy="12" r="10.500" fill="#eaf8e0"/><circle cx="12" cy="12" r="9.500" fill="#5cba2c"/><path d="M18 13H8q1 4 4 4 3 0 4-1l1 2q-6 4-11-1-3-6 2-10t9 0 1 6zM8 11h7q-1-3-3.500-3T8 11z" fill="#fff" fill-rule="evenodd"/><path d="M1 21Q8 20 13 12t10-9" fill="none" stroke="#a5e25a"/></svg></button>
    <button class="run active" aria-label="GGJ2013"><svg viewBox="0 0 24 24"><use href="#app"/></svg></button>
    <button class="run" aria-label="记事"><svg viewBox="0 0 24 24"><rect width="24" height="24" rx="3" fill="#f2a01a"/><rect x="2" y="2" width="20" height="20" fill="#ffc945"/><path d="M3 7l11-2 3 14-11 2z" fill="#fff"/><path d="M6 9l7-1M6 12l8-1M7 15l8-1M8 18l7-1" stroke="#a77"/><path d="M22 1l-8 13" stroke="#843a10" stroke-width="2"/></svg></button>
  </div>
  <div class="tray">
    <svg viewBox="0 0 16 16"><path d="M2 11l6-6 6 6" fill="none" stroke="#fff" stroke-width="1.500"/></svg>
    <svg viewBox="0 0 16 16"><path d="M1 4.500h12v7H1zM13 6.500h2v3h-2" fill="none" stroke="#fff"/><path d="M3 6h5v4H3z" fill="#fff"/></svg>
    <svg viewBox="0 0 16 16"><path d="M2 14Q2 3 13 2M5 14q0-8 8-9M8 14q0-5 5-6" fill="none" stroke="#ddd" stroke-width="1.300"/><path d="M11 12h3v3h-3z" fill="#fff"/></svg>
    <svg viewBox="0 0 16 16"><path d="M1 6h3l3-3v10l-3-3H1zM9 6q2 2 0 4M11 4q4 4 0 8M13 2q5 6 0 12" fill="none" stroke="#fff"/></svg>
    <svg class="kb" viewBox="0 0 23 14"><path d="M.5.500h22v12H.5z" fill="none" stroke="#fff"/><path d="M3 3.500h17M3 6.500h17" stroke="#fff" stroke-dasharray="2 1"/><path d="M6 9.500h11" stroke="#fff"/></svg>
    <span class="zh">中</span>
    <svg><use href="#sogou"/></svg>
  </div>
  <div class="clock"><time>11:07</time><time>2017/10/26</time></div>
  <button class="notes" aria-label="通知"><svg viewBox="0 0 26 26"><path d="M2 2h16v12h-5l-3 4v-4H2z" fill="#fff"/><path d="M5 5h10M5 8h10M5 11h7" stroke="#111"/><circle cx="17" cy="17" r="8" fill="#444" stroke="#aaa"/></svg><b>2</b></button>
</div>

<div class="ime">
  <svg class="logo"><use href="#sogou"/></svg>
  <span>中</span>
  <svg viewBox="0 0 16 16"><circle cx="4" cy="5" r="2" fill="none" stroke="#1d76c8" stroke-width="1.500"/><path d="M10 9h3v3l-2 2" fill="none" stroke="#1d76c8" stroke-width="2"/></svg>
  <svg viewBox="0 0 16 16"><rect x="5" y="0" width="6" height="10" rx="3" fill="#1d76c8"/><path d="M2.500 7q0 5 5.500 5t5.500-5M8 12v3M5 15h6" fill="none" stroke="#1d76c8" stroke-width="1.500"/></svg>
  <svg viewBox="0 0 16 16"><path d="M.7 3h14.600v10H.7z" fill="none" stroke="#1d76c8" stroke-width="1.400"/><path d="M3 6h10M3 8.500h10" stroke="#1d76c8" stroke-dasharray="2 1" stroke-width="1.500"/><path d="M5 11h6" stroke="#1d76c8"/></svg>
  <svg viewBox="0 0 16 16"><circle cx="6" cy="4" r="3.500" fill="#b3bccb"/><path d="M0 14q0-6 6-6t6 6z" fill="#b3bccb"/><path d="M7 9h9v6H7z" fill="#e5e9f0" stroke="#9aa5b8"/><path d="M9.500 10v4M12 10.500h2v3h-2z" fill="none" stroke="#7b8799"/></svg>
  <svg viewBox="0 0 16 16"><path d="M1 3l4-2q3 2 6 0l4 2v4h-3v8H4V7H1z" fill="#1d76c8"/></svg>
  <svg viewBox="0 0 16 16"><path d="M1 13l7-7q-1-5 5-5l-3 3 2 2 3-3q1 6-5 5l-7 7z" fill="#1d76c8"/></svg>
</div>
<div class="badge">71</div>
</body>
</html>
```
FILE: styles.css
```css
* { box-sizing: border-box; }
html, body { height: 100%; }
body {
  margin: 0;
  display: flex;
  flex-direction: column;
  position: relative;
  overflow: hidden;
  background: #f0f0f0;
  color: #000;
  font: 12px/16px "Noto Sans", "Noto Sans CJK SC", sans-serif;
}
button, input, select { font: inherit; color: inherit; }
button { border: 0; padding: 0; background: none; display: flex; align-items: center; white-space: nowrap; }
ul { list-style: none; margin: 0; padding: 0; }
svg { flex: none; display: block; }
.defs { position: absolute; width: 0; height: 0; }
.i16 { width: 16px; height: 16px; }
.i12 { width: 12px; height: 12px; }
.caret { width: 6px; height: 4px; }
.more { width: 8px; height: 7px; }
.tw { width: 10px; height: 10px; color: #555; }
.flip { transform: rotate(180deg); }
.left { transform: rotate(90deg); }
.right, .shut { transform: rotate(-90deg); }
.shut { color: #aaa; }
.m { font-family: "DejaVu Sans Mono", monospace; font-size: 10px; }
.space { flex: 1; }

.titlebar { display: flex; align-items: center; height: 23px; padding: 0 2px; gap: 5px; background: #fff; flex: none; }
.titlebar h1 { margin: 0; font-size: 12px; font-weight: 400; flex: 1; white-space: pre; }
.path { font-family: Roboto, sans-serif; font-size: 13px; }
.winbtns { display: flex; }
.winbtns button { width: 46px; height: 20px; justify-content: center; }
.winbtns svg { width: 10px; height: 10px; }

.menubar { display: flex; height: 30px; flex: none; gap: 2px; }
.menubar > div { display: flex; align-items: center; }
.menus { gap: 11px; padding-left: 7px; width: 934px; }
.menus button, .account button { gap: 4px; }
.menus button .caret { margin-left: 2px; }
.account button .caret { margin-left: 5px; }
.tip { width: 188px; justify-content: center; background: #f6f6f6; }
.tip a { color: #6b3008; text-decoration: none; }
.account { flex: 1; gap: 9px; padding: 0 4px; background: #f6f6f6; }
.account .more { margin: 0 4px 12px auto; }

.toolbars { display: flex; height: 30px; flex: none; gap: 2px; }
.bar { display: flex; align-items: center; background: linear-gradient(#fdfdfd, #efefef); border-radius: 3px; }
.bar button { gap: 4px; height: 22px; }
.bar button:disabled { color: #808080; }
.sep { width: 1px; height: 18px; background: #c4c4c4; flex: none; }
.toolbars .more { margin: 0 8px 12px auto; }
.files { width: 151px; padding-left: 5px; gap: 6px; }
.files button { gap: 9px; }
.edit { width: 549px; padding-left: 4px; gap: 7px; }
.sigma { width: 16px; text-align: center; font: bold 15px/16px "Liberation Serif", serif; }
.views { flex: 1; padding-left: 2px; gap: 6px; }
.views button { gap: 3px; }
.views .caret { margin-left: 4px; }
.views .tight .caret { margin-left: 0; }
.views .boxed { height: 24px; border: 1px solid #6c6c6c; padding: 0 3px 0 2px; margin-right: -2px; }

.workspace { flex: 1; display: flex; min-height: 0; gap: 5px; }
.nav { width: 166px; display: flex; flex-direction: column; flex: none; padding: 1px 1px 1px 0; }
.navtitle { display: flex; align-items: center; height: 16px; background: #0653de; color: #fff; font-size: 13px; gap: 9px; padding-right: 5px; margin: 0 -1px 1px 0; }
.navtitle span { flex: 1; }
.navtitle svg { width: 9px; height: 9px; }
.navbtn { flex: none; height: 22px; justify-content: center; border: 1px solid #a5a5a5; border-top-color: #fff; background: #f0f0f0; }
.expand { display: flex; align-items: center; gap: 6px; height: 26px; padding-left: 5px; margin: 1px 0 0 2px; background: linear-gradient(#fdfdfd, #ebebeb); flex: none; }
.expand svg { width: 16px; height: 14px; }
.treebox { flex: 1; min-height: 0; margin: 0 0 1px 2px; border: 1px solid #80868e; background: #fff; display: flex; flex-direction: column; }
.treerow { flex: 1; display: flex; min-height: 0; padding-right: 1px; }
.tree { flex: 1; overflow: hidden; padding-top: 1px; white-space: nowrap; }
.folder { display: flex; align-items: center; height: 16px; padding-left: 6px; }
.folder .i16 { margin: 0 5px 0 7px; }
.sub { margin-left: 31px; position: relative; }
.sub li { display: flex; align-items: center; height: 16px; padding-left: 11px; position: relative; }
.sub li > .i16, .hl .i16 { margin-right: 5px; }
.sub li::before { content: ""; position: absolute; left: 0; top: 0; bottom: 0; border-left: 1px dotted #888; }
.sub li:last-child::before { bottom: 50%; }
.sub li::after { content: ""; position: absolute; left: 0; top: 50%; width: 10px; border-top: 1px dotted #888; }
.tree .sub::before { content: ""; position: absolute; left: -19px; top: 0; bottom: 0; border-left: 1px dotted #888; }
.tree .last::before { display: none; }
.hl { display: flex; align-items: center; height: 16px; background: #d9d9d9; }
.book { width: 14px; height: 14px; }
.vscroll { width: 16px; flex: none; display: flex; flex-direction: column; align-items: center; background: #f0f0f0; padding: 4px 0; gap: 7px; }
.vscroll .thumb { width: 15px; background: #cdcdcd; height: 223px; }
.vscroll .tall { height: 384px; margin-top: -3px; }
.navscroll { padding-top: 5px; }
.hscroll { display: flex; align-items: center; height: 16px; margin: 0 2px 1px 1px; padding: 0 18px 0 3px; background: #f0f0f0; flex: none; }
.hscroll .thumb { width: 102px; height: 15px; background: #cdcdcd; margin: 0 auto 0 5px; }

.content { flex: 1; display: flex; flex-direction: column; min-width: 0; }
.comp { height: 29px; flex: none; gap: 6px; padding-left: 4px; }
.comp .caret { margin-left: -1px; }
.floor, .combo { display: flex; align-items: center; }
.floor { gap: 6px; margin-left: -1px; }
.combo { background: #fff; height: 22px; width: 60px; padding-right: 4px; }
.combo select { flex: 1; min-width: 0; border: 0; background: none; appearance: none; padding: 0 2px; height: 20px; }
.mv { margin-right: 2px; }
.comp .mv { gap: 7px; }
.panels { flex: 1; display: flex; gap: 5px; min-height: 0; }
.list { width: 183px; flex: none; display: flex; flex-direction: column; border: 1px solid #80868e; border-top-color: #f0f0f0; background: #fff; margin-bottom: 1px; padding-top: 4px; }
.search { display: flex; gap: 4px; align-items: center; }
.search input { width: 157px; height: 24px; border: 1px solid #777; padding: 0 2px; min-width: 0; }
.search input::placeholder { color: #777; opacity: 1; }
.listbox { flex: 1; border-top: 1px solid #80868e; margin-top: 1px; padding-top: 1px; }
.root { display: flex; align-items: center; height: 16px; padding-left: 6px; }
.root .i16 { margin: 0 5px 0 7px; }
.comps li { padding-left: 13px; }
.comps .i12 { margin-right: 6px; }
.picked .halo { display: flex; align-items: center; height: 16px; background: #cde8ff; padding: 0 2px 0 4px; margin-left: -4px; }
.picked .m { background: #2a6fd2; line-height: 16px; padding: 0 2px 0 1px; margin-left: -1px; }

.props { flex: 1; display: flex; flex-direction: column; min-width: 0; padding: 0 4px 2px 0; background: #f0f0f0; }
.tabs { display: flex; align-items: flex-end; }
.tab { height: 19px; padding: 0 8px 0 5px; border: 1px solid #d9d9d9; border-bottom: 0; background: #f0f0f0; position: relative; }
.tab.on { background: #fff; height: 21px; }
.tab.on::after { content: ""; position: absolute; left: 0; right: 0; bottom: -1px; height: 1px; background: #fff; }
.tabbody { flex: 1; min-height: 0; background: #fff; border: 1px solid #d9d9d9; padding: 2px; display: flex; }
.gridbox { flex: 1; display: flex; min-width: 0; border: 1px solid #888; }
.gridwrap { flex: 1; min-width: 0; overflow: hidden; padding-left: 1px; }
table { border-collapse: collapse; table-layout: fixed; width: 100%; }
.c1 { width: 21px; }
.c2 { width: 191px; }
th, td { height: 19px; padding: 0; border: 1px solid #c0c0c0; line-height: 16px; text-align: left; white-space: nowrap; }
th { font-weight: 400; text-align: center; background: #f4f4f4; border-left: 0; }
thead th { height: 23px; border-top: 0; background: linear-gradient(#fdfdfd, #f0f0f0); }
thead .hot { background: linear-gradient(#fad898, #efbd5d); }
td:nth-child(2) { padding-left: 19px; }
td:nth-child(3) { padding-left: 2px; }
.sel th { background: #fcd088; color: #606; }
.sel td { background: #dcebfa; }
.sel td:nth-child(2) { background: #0078d7; color: #fff; }
.link td:nth-child(2) { color: #00f; }
.dim td { color: #808080; }
.grp td:nth-child(2) { padding-left: 2px; }
.grp td button { display: inline-block; width: 13px; height: 13px; margin-right: 4px; border: 1px solid #999; background: #fff; color: #000; line-height: 11px; text-align: center; vertical-align: -1px; }

.dialog { position: absolute; left: 593px; top: 132px; right: 22px; bottom: 65px; display: flex; flex-direction: column; border: 1px solid #4a4f55; background: linear-gradient(#bccbda, #d7e4f2 30px); padding: 0 6px 6px; }
.dialog h2 { margin: 0; font-size: 12px; font-weight: 400; color: #8f979f; height: 30px; line-height: 38px; padding-left: 1px; }
.dlgmain { flex: 1; min-height: 0; display: flex; flex-direction: column; background: #f0f0f0; margin-left: 1px; }
.dialog .tabs { padding-left: 2px; }
.dialog .tab { padding: 0 10px 0 5px; }
.dialog .tab.on { padding: 0 12px 0 6px; }
.dlgbody { flex: 1; min-height: 0; display: flex; flex-direction: column; align-items: flex-start; border: 1px solid #d4d4d4; box-shadow: inset 0 0 0 2px #fff; margin-right: 2px; padding: 3px 3px 2px 4px; }
.line1, .line2 { gap: 7px; padding: 0 8px 0 6px; height: 28px; flex: none; }
.line1 .caret { margin-left: 3px; }
.spec { width: 76px; margin-left: -1px; margin-right: -3px; }
.bar .active { border: 1px solid #2a8ad4; background: #e0eef9; height: 23px; padding: 0 3px; }
.line1 .active { margin: 0 -3px 0 -4px; gap: 3px; }
.line1 button { gap: 3px; }
.line2 { gap: 1px; padding-right: 4px; }
.line2 .sep { margin: 0 0 0 8px; }
.line2 .vert { margin-left: 5px; }
.canvas { flex: 1; min-height: 0; width: 100%; border: 2px solid #f00; background: #14171f; }
.ruler text { font: 12px "Noto Sans", sans-serif; fill: #2f3742; }
.dims text { font: 21px "DejaVu Sans", sans-serif; fill: #fff; }
.note { font: 12px "Noto Sans CJK SC", sans-serif; fill: #c8c8c8; }
.green { fill: #0f0; }
.snap { display: flex; gap: 2px; height: 29px; flex: none; align-items: center; }
.snap .bar { height: 25px; padding: 0 6px 0 3px; gap: 7px; }
.snap .bar button { gap: 4px; }
.dlgstatus { display: flex; gap: 3px; height: 25px; flex: none; padding: 3px 0 0; }
.dlgstatus span { display: flex; align-items: center; border: 1px solid #d0d0d0; background: linear-gradient(#f4f4f4, #fcfcfc); }
.xy { width: 98px; padding-left: 4px; }
.msg { flex: 1; }
.msg svg { width: 10px; height: 10px; margin: 8px 1px 0 auto; }

.status { display: flex; height: 20px; margin-top: 2px; gap: 2px; flex: none; }
.status > span { display: flex; align-items: center; border: 1px solid #d4d4d4; background: linear-gradient(#f4f4f4, #fdfdfd); padding-left: 1px; white-space: nowrap; }
.s1 { width: 148px; }
.s2 { width: 78px; }
.s3 { width: 98px; }
.s4 { width: 48px; }
.s5 { flex: 1; }
.s6 { width: 70px; }

.taskbar { display: flex; height: 40px; flex: none; background: #020a0e; color: #fff; }
.start { width: 48px; justify-content: center; background: #000; }
.start svg { width: 16px; height: 16px; }
.find { width: 344px; display: flex; align-items: center; background: #333; padding: 0 14px 0 9px; gap: 5px; flex: none; }
.find svg { width: 22px; height: 22px; }
.find input { flex: 1; min-width: 0; border: 0; background: none; font-size: 14px; padding: 0; height: 24px; }
.find input::placeholder { color: #999; opacity: 1; }
.find .mic { width: 12px; height: 18px; }
.apps { display: flex; flex: 1; gap: 2px; }
.apps button { width: 48px; justify-content: center; border-bottom: 2px solid transparent; position: relative; padding-top: 2px; }
.apps svg { width: 24px; height: 24px; }
.apps .run { margin-left: -1px; }
.apps .run::after { content: ""; position: absolute; left: 4px; right: 4px; bottom: -2px; height: 2px; background: #76b9ed; }
.apps .active { background: #344046; }
.apps .active::after { left: 0; right: 0; }
.tray { display: flex; align-items: center; gap: 8px; }
.tray svg { width: 16px; height: 16px; }
.tray .kb { width: 23px; height: 14px; }
.zh { font-size: 13px; }
.clock { width: 94px; display: flex; flex-direction: column; justify-content: center; text-align: center; line-height: 19px; }
.notes { width: 43px; justify-content: center; position: relative; }
.notes svg { width: 26px; height: 26px; }
.notes b { position: absolute; left: 22px; top: 17px; color: #fff; }

.ime { position: absolute; left: 804px; top: 13px; height: 24px; display: flex; align-items: center; gap: 6px; background: #fff; border: 1px solid #aebfd0; padding-right: 3px; color: #1d76c8; font-weight: 700; font-size: 15px; }
.ime svg { width: 16px; height: 16px; }
.ime .logo { width: 28px; height: 28px; }
.badge { position: absolute; left: 1139px; top: -29px; width: 48px; height: 48px; border-radius: 50%; background: #3fc35c; border: 2px solid #b8c4ba; box-shadow: 0 1px 3px #888, inset 0 0 0 1px #1c8a4c; color: #fff; font-weight: 700; text-align: center; line-height: 68px; }
```
